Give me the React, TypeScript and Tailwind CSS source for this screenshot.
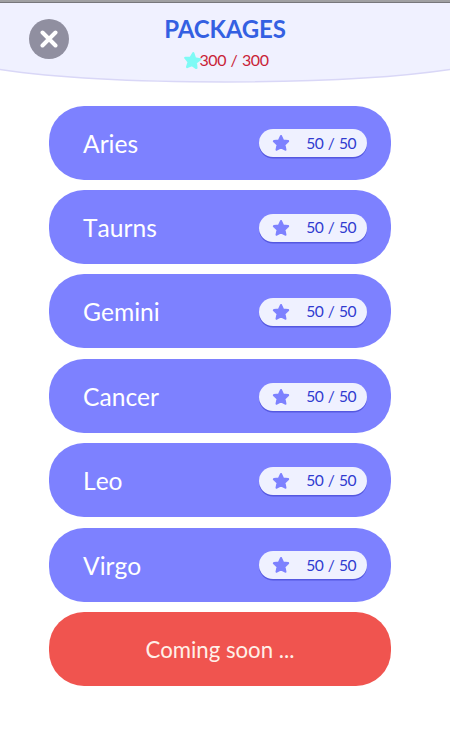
import React from "react";

const packages = [
  { name: "Aries", stars: 50, total: 50 },
  { name: "Taurns", stars: 50, total: 50 },
  { name: "Gemini", stars: 50, total: 50 },
  { name: "Cancer", stars: 50, total: 50 },
  { name: "Leo", stars: 50, total: 50 },
  { name: "Virgo", stars: 50, total: 50 },
];

const Star = ({ className }: { className: string }) => (
  <svg viewBox="0 0 24 24" className={className} fill="currentColor" stroke="currentColor" strokeWidth="3" strokeLinejoin="round">
    <path d="M12 2.8 L14.8 8.9 L21.4 9.6 L16.5 14.2 L17.8 20.8 L12 17.6 L6.2 20.8 L7.5 14.2 L2.6 9.6 L9.2 8.9 Z" />
  </svg>
);

const Header = () => (
  <header className="relative h-[84px] shrink-0">
    {/* curved header background */}
    <svg viewBox="0 0 450 84" className="absolute inset-0 h-[84px] w-[450px]">
      <path d="M-4 0 H454 V69 Q370 82 225 82 Q80 82 -4 69 Z" fill="#f0f1ff" stroke="#d9d7f7" strokeWidth="1.5" />
      <rect width="450" height="2" fill="#a0a0a2" />
      <rect y="2" width="450" height="1" fill="#77777b" />
    </svg>
    <div className="relative grid grid-cols-[40px_1fr_40px] px-[29.4px]">
      <button aria-label="Close" className="mt-[19.4px] flex size-10 items-center justify-center rounded-full bg-[#908fa0]">
        <svg viewBox="0 0 18 18" className="size-[18px]" stroke="white" strokeWidth="4" strokeLinecap="round">
          <path d="M2.5 2.5 L15.5 15.5 M15.5 2.5 L2.5 15.5" />
        </svg>
      </button>
      <div className="flex flex-col items-center pt-[15px]">
        <h1 className="text-[24px] leading-7 font-bold tracking-[-0.15px] text-[#3460e2]">PACKAGES</h1>
        <div className="mt-[7px] ml-[2px] flex items-center text-[16px] leading-5 tracking-[-0.45px] text-[#c91f38] [word-spacing:1px]">
          <Star className="-mr-[3px] size-[19px] rotate-6 text-[#7efaf5]" />
          <span className="relative">300 / 300</span>
        </div>
      </div>
    </div>
  </header>
);

const App = () => {
  return (
    <div className="flex h-[730px] w-[450px] flex-col overflow-hidden bg-white font-['Lato',sans-serif]">
      <Header />
      <main className="mt-[21.6px] ml-[49px] flex w-[342px] flex-col gap-[10.4px]">
        {packages.map((item) => (
          <button key={item.name} className="flex h-[74px] items-center justify-between rounded-[35px] bg-[#7d81ff] pr-6 pl-[34px] text-white">
            <span className="pt-[2px] text-[24.6px] leading-8 [font-kerning:none]">{item.name}</span>
            <span className="mt-[1.5px] flex h-[28px] w-[108px] items-center justify-between rounded-full bg-[#eff1ff] pr-[11px] pl-[13px] text-[15.6px] tracking-[-0.5px] text-[#303bd0] [word-spacing:1px] shadow-[0_1.5px_0_#5558e0]">
              <Star className="size-[18px] text-[#7d81ff]" />
              <span>
                {item.stars} / {item.total}
              </span>
            </span>
          </button>
        ))}
        <button className="flex h-[74px] items-center justify-center rounded-[35px] bg-[#f0544f] pt-px text-[22.2px] text-[#fff0e8]">
          Coming soon ...
        </button>
      </main>
    </div>
  );
};

export default App;
